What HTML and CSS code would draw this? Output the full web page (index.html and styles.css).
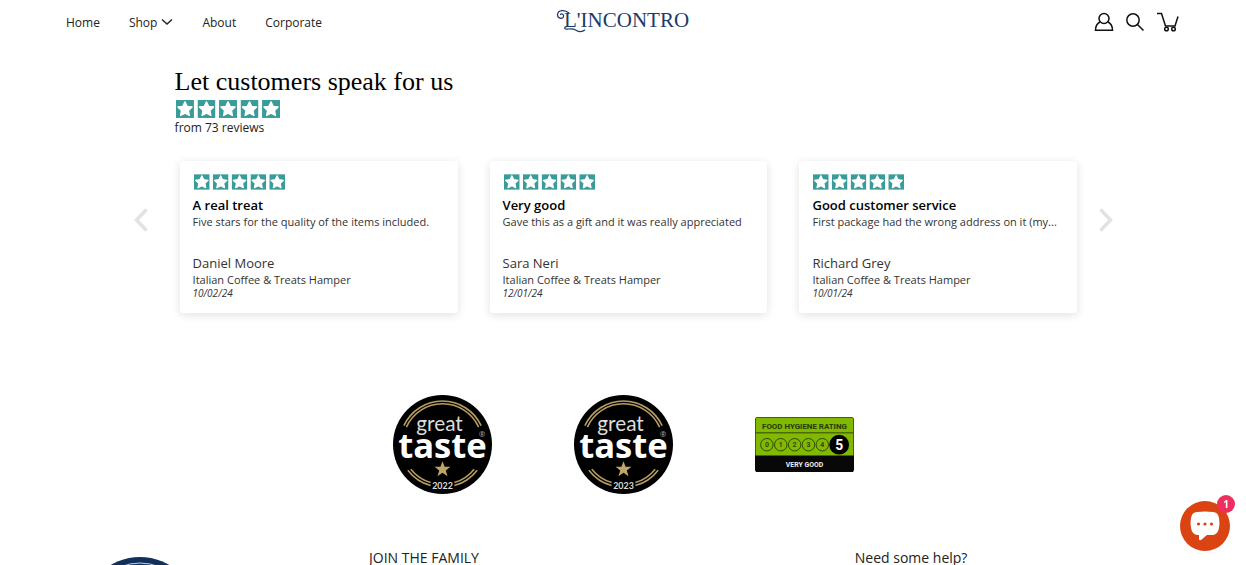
FILE: index.html
```
<!DOCTYPE html>
<html lang="en">

<head>
    <meta charset="utf-8">
    <meta name="viewport" content="width=device-width, initial-scale=1">
    <title>L'Incontro</title>
    <link rel="stylesheet" href="styles.css">
</head>

<body>
    <!-- shared shapes -->
    <svg class="defs" aria-hidden="true">
        <defs>
            <symbol id="star" viewBox="0 0 20 20">
                <rect width="20" height="20" fill="#399c98"/>
                <path d="M10 2l2.4 5 5.5.8-4 3.9 1 5.5-4.9-2.6-4.9 2.6 1-5.5-4-3.9 5.5-.8z" fill="#fff" stroke="#fff" stroke-width="1.5" stroke-linejoin="round"/>
            </symbol>
            <symbol id="stars" viewBox="0 0 116 20">
                <use href="#star" width="20" height="20"/>
                <use href="#star" x="24" width="20" height="20"/>
                <use href="#star" x="48" width="20" height="20"/>
                <use href="#star" x="72" width="20" height="20"/>
                <use href="#star" x="96" width="20" height="20"/>
            </symbol>
            <symbol id="award" viewBox="0 0 100 100">
                <circle cx="50" cy="50" r="50"/>
                <g fill="none" stroke="#b59c61" stroke-width="1.6">
                    <path d="M11 31A43 43 0 0 1 89 31"/>
                    <path d="M13.500 32.500A40 40 0 0 1 86.500 32.500"/>
                    <path d="M15 76A43.500 43.500 0 0 0 38 91.500M85 76A43.500 43.500 0 0 1 62 91.500"/>
                    <path d="M18 75A40 40 0 0 0 38 88.500M82 75A40 40 0 0 1 62 88.500"/>
                </g>
                <path d="M50 67l2.100 5.500h5.900l-4.700 3.700 1.800 5.800-5.100-3.400-5.100 3.400 1.800-5.800-4.700-3.700h5.900z" fill="#c0a566"/>
                <text class="award-great" x="47" y="36" text-anchor="middle">great</text>
                <text class="award-taste" x="50" y="64" text-anchor="middle">taste</text>
                <text class="award-mark" x="90" y="42" text-anchor="middle">®</text>
            </symbol>
        </defs>
    </svg>

    <header class="header">
        <nav class="nav">
            <a href="#">Home</a>
            <a href="#">Shop
                <svg class="chevron" viewBox="0 0 12 8"><path d="M1 1.500l5 4.500 5-4.500" fill="none" stroke="#222" stroke-width="1.400"/></svg>
            </a>
            <a href="#">About</a>
            <a href="#">Corporate</a>
        </nav>
        <a class="logo" href="#" aria-label="L'Incontro">
            <svg width="136" height="28" viewBox="0 0 136 28">
                <text class="logo-text" x="9" y="19">L'INCONTRO</text>
                <path d="M14 5C10 1.500 3 1.500 2.500 6.500c-.2 4 5 5 6 2.200.8-2.300-2-3.600-3.300-1.900M12 18.500c-3 .5-3 2.700-.5 2.700 4-.3 6-1.200 9.500 1 3 1.800 6 2.300 9-.5" fill="none" stroke="#1b3b6b" stroke-width="1.200"/>
            </svg>
        </a>
        <div class="tools">
            <a href="#" aria-label="Account">
                <svg width="20" height="20" viewBox="0 0 20 20" fill="none" stroke="#111" stroke-width="1.500"><circle cx="10" cy="6.500" r="5"/><path d="M6 10C3 11.500 1.500 14 1.500 18.200h17c0-4.200-1.500-6.700-4.500-8.200"/></svg>
            </a>
            <a href="#" aria-label="Search">
                <svg width="20" height="20" viewBox="0 0 20 20" fill="none" stroke="#111" stroke-width="1.500"><circle cx="8" cy="8" r="6.200"/><path d="M12.500 12.500l6 6"/></svg>
            </a>
            <a href="#" aria-label="Cart">
                <svg width="24" height="20" viewBox="0 0 24 20" fill="none" stroke="#111" stroke-width="1.500"><path d="M1 1.500h4.500l4 12.500h9.500L22 4.500"/><circle cx="10.500" cy="17" r="1.800"/><circle cx="17.500" cy="17" r="1.800"/></svg>
            </a>
        </div>
    </header>

    <main>
        <section class="reviews">
            <div class="reviews-head">
                <h2>Let customers speak for us</h2>
                <svg class="stars-large" role="img" aria-label="5 stars"><use href="#stars"/></svg>
                <p>from 73 reviews</p>
            </div>
            <div class="carousel">
                <button class="arrow" type="button" aria-label="Previous">
                    <svg width="14" height="24" viewBox="0 0 14 24"><path d="M12.500 1.500L2.500 12l10 10.500" fill="none" stroke="#e2e2e2" stroke-width="3.500"/></svg>
                </button>
                <div class="cards">
                    <article class="card">
                        <svg class="stars" role="img" aria-label="5 stars"><use href="#stars"/></svg>
                        <h3>A real treat</h3>
                        <p class="review-text">Five stars for the quality of the items included.</p>
                        <p class="author">Daniel Moore</p>
                        <p class="product">Italian Coffee &amp; Treats Hamper</p>
                        <time datetime="2024-02-10">10/02/24</time>
                    </article>
                    <article class="card">
                        <svg class="stars" role="img" aria-label="5 stars"><use href="#stars"/></svg>
                        <h3>Very good</h3>
                        <p class="review-text">Gave this as a gift and it was really appreciated</p>
                        <p class="author">Sara Neri</p>
                        <p class="product">Italian Coffee &amp; Treats Hamper</p>
                        <time datetime="2024-01-12">12/01/24</time>
                    </article>
                    <article class="card">
                        <svg class="stars" role="img" aria-label="5 stars"><use href="#stars"/></svg>
                        <h3>Good customer service</h3>
                        <p class="review-text">First package had the wrong address on it (my...</p>
                        <p class="author">Richard Grey</p>
                        <p class="product">Italian Coffee &amp; Treats Hamper</p>
                        <time datetime="2024-01-10">10/01/24</time>
                    </article>
                </div>
                <button class="arrow" type="button" aria-label="Next">
                    <svg width="14" height="24" viewBox="0 0 14 24"><path d="M1.500 1.500l10 10.500-10 10.500" fill="none" stroke="#e2e2e2" stroke-width="3.500"/></svg>
                </button>
            </div>
        </section>

        <section class="badges">
            <svg class="badge" viewBox="0 0 100 100">
                <use href="#award"/>
                <text class="award-year" x="50" y="95" text-anchor="middle">2022</text>
            </svg>
            <svg class="badge" viewBox="0 0 100 100">
                <use href="#award"/>
                <text class="award-year" x="50" y="95" text-anchor="middle">2023</text>
            </svg>
            <svg class="badge" viewBox="0 0 100 56">
                <rect width="100" height="56" rx="3" fill="#080808"/>
                <path d="M3 .5h94a2.500 2.500 0 0 1 2.500 2.500v36H.5V3A2.500 2.500 0 0 1 3 .5z" fill="#80b900"/>
                <path d="M1 16h98" stroke="#33480a"/>
                <text class="hygiene-title" x="50" y="12" text-anchor="middle">FOOD HYGIENE RATING</text>
                <g fill="none" stroke="#33480a" stroke-width="1">
                    <circle cx="12" cy="28" r="6.300"/><circle cx="26" cy="28" r="6.300"/><circle cx="40" cy="28" r="6.300"/><circle cx="54" cy="28" r="6.300"/><circle cx="68" cy="28" r="6.300"/>
                </g>
                <g class="hygiene-scale" text-anchor="middle">
                    <text x="12" y="30">0</text><text x="26" y="30">1</text><text x="40" y="30">2</text><text x="54" y="30">3</text><text x="68" y="30">4</text>
                </g>
                <circle cx="85" cy="28" r="10"/>
                <text class="hygiene-score" x="85" y="33" text-anchor="middle">5</text>
                <text class="hygiene-label" x="50" y="51" text-anchor="middle">VERY GOOD</text>
            </svg>
        </section>
    </main>

    <footer class="footer">
        <svg class="seal" width="116" height="116" viewBox="0 0 116 116">
            <circle cx="58" cy="58" r="57" fill="#12305c"/>
            <circle cx="58" cy="58" r="51" fill="none" stroke="#c9d1dd" stroke-width="1"/>
        </svg>
        <h4>JOIN THE FAMILY</h4>
        <h4>Need some help?</h4>
    </footer>

    <button class="chat" type="button" aria-label="Open chat">
        <svg width="30" height="30" viewBox="0 0 30 30">
            <path d="M7 1Q15 0 23 1 28 1 29 7 30 12 29 17 28 23 23 24h-6l-6 5q-2 1-2-1v-4H7Q2 23 1 17 0 12 1 7 2 1 7 1z" fill="#fff"/>
            <g fill="#d94412"><circle cx="8.500" cy="13" r="1.600"/><circle cx="15" cy="13" r="1.600"/><circle cx="21.500" cy="13" r="1.600"/></g>
        </svg>
        <span class="chat-count">1</span>
    </button>
</body>

</html>
```
FILE: styles.css
```
* {
    box-sizing: border-box;
}

html {
    overflow: hidden;
}

body {
    margin: 0;
    background: #fff;
    color: #222;
    font-family: "Open Sans", "Noto Sans", sans-serif;
    font-size: 12px;
}

h2, h3, h4, p {
    margin: 0;
}

a {
    color: inherit;
    text-decoration: none;
}

button {
    padding: 0;
    border: 0;
    background: none;
    cursor: pointer;
}

svg {
    display: block;
}

.defs {
    position: absolute;
    width: 0;
    height: 0;
}

.header {
    display: grid;
    grid-template-columns: 1fr auto 1fr;
    align-items: center;
    height: 44px;
    padding: 0 66px;
}

.nav {
    display: flex;
    gap: 29px;
    font-size: 12px;
}

.nav a {
    display: flex;
    align-items: center;
    gap: 4px;
}

.chevron {
    width: 12px;
    height: 8px;
}

.logo-text {
    font-family: "Liberation Serif", serif;
    font-size: 21px;
    fill: #1b3b6b;
}

.tools {
    display: flex;
    justify-content: flex-end;
    gap: 11px;
}

.reviews {
    padding: 22px 10% 0;
}

.reviews-head {
    padding-left: 50px;
}

.reviews-head h2 {
    font-family: "Liberation Serif", serif;
    font-size: 26px;
    font-weight: 400;
    line-height: 32px;
    color: #000;
}

.stars-large {
    width: 104px;
    height: 18px;
    margin: 2px 0 0 1px;
}

.reviews-head p {
    line-height: 20px;
}

.carousel {
    display: flex;
    align-items: flex-start;
    justify-content: space-between;
    margin: 23px 8px 0 9px;
}

.arrow {
    margin-top: 47px;
}

.cards {
    display: grid;
    grid-template-columns: repeat(3, 1fr);
    gap: 32px;
    flex: 1;
    margin: 0 22px 0 32px;
}

.card {
    height: 152px;
    padding: 13px;
    border-radius: 3px;
    background: #fff;
    box-shadow: 0 2px 10px rgba(0, 0, 0, 0.12);
    color: #333;
    white-space: nowrap;
}

.stars {
    width: 91px;
    height: 16px;
    margin-left: 1px;
}

.card h3 {
    margin-top: 6px;
    font-size: 13px;
    font-weight: 600;
    line-height: 18px;
    color: #000;
}

.review-text,
.product {
    font-size: 11px;
    line-height: 16px;
}

.author {
    margin-top: 24px;
    font-size: 13px;
    line-height: 18px;
}

.card time {
    display: block;
    font-size: 10px;
    font-style: italic;
    line-height: 10px;
}

.badges {
    display: flex;
    justify-content: center;
    align-items: center;
    gap: 82px;
    margin-top: 82px;
}

.badge {
    width: 99px;
}

.award-great {
    font-family: Lato, sans-serif;
    font-size: 21px;
    fill: #ddd;
}

.award-taste {
    font-family: "Open Sans", sans-serif;
    font-size: 35px;
    font-weight: 700;
    fill: #fff;
}

.award-mark {
    font-size: 8px;
    fill: #aaa;
}

.award-year {
    font-family: Lato, sans-serif;
    font-size: 9px;
    font-weight: 700;
    fill: #ddd;
}

.hygiene-title {
    font-family: Roboto, sans-serif;
    font-size: 8px;
    font-weight: 700;
    fill: #26380a;
}

.hygiene-scale {
    font-family: Roboto, sans-serif;
    font-size: 7px;
    font-weight: 700;
    fill: #33480a;
}

.hygiene-score {
    font-family: Roboto, sans-serif;
    font-size: 14px;
    font-weight: 700;
    fill: #fff;
}

.hygiene-label {
    font-family: Roboto, sans-serif;
    font-size: 7px;
    font-weight: 700;
    fill: #eee;
}

.footer {
    display: grid;
    grid-template-columns: 26fr 44fr 30fr;
    margin-top: 54px;
    padding: 0 60px 0 82px;
}

.footer h4 {
    font-size: 14px;
    font-weight: 400;
    line-height: 20px;
}

.seal {
    margin-top: 8px;
}

.chat {
    position: fixed;
    right: 16px;
    bottom: 14px;
    display: flex;
    align-items: center;
    justify-content: center;
    width: 50px;
    height: 50px;
    border-radius: 50%;
    background: #d94412;
}

.chat-count {
    position: absolute;
    top: -6px;
    right: -5px;
    width: 18px;
    border-radius: 9px;
    background: #ee2e5d;
    color: #fff;
    font: 700 10px/18px "Open Sans", sans-serif;
}
```
